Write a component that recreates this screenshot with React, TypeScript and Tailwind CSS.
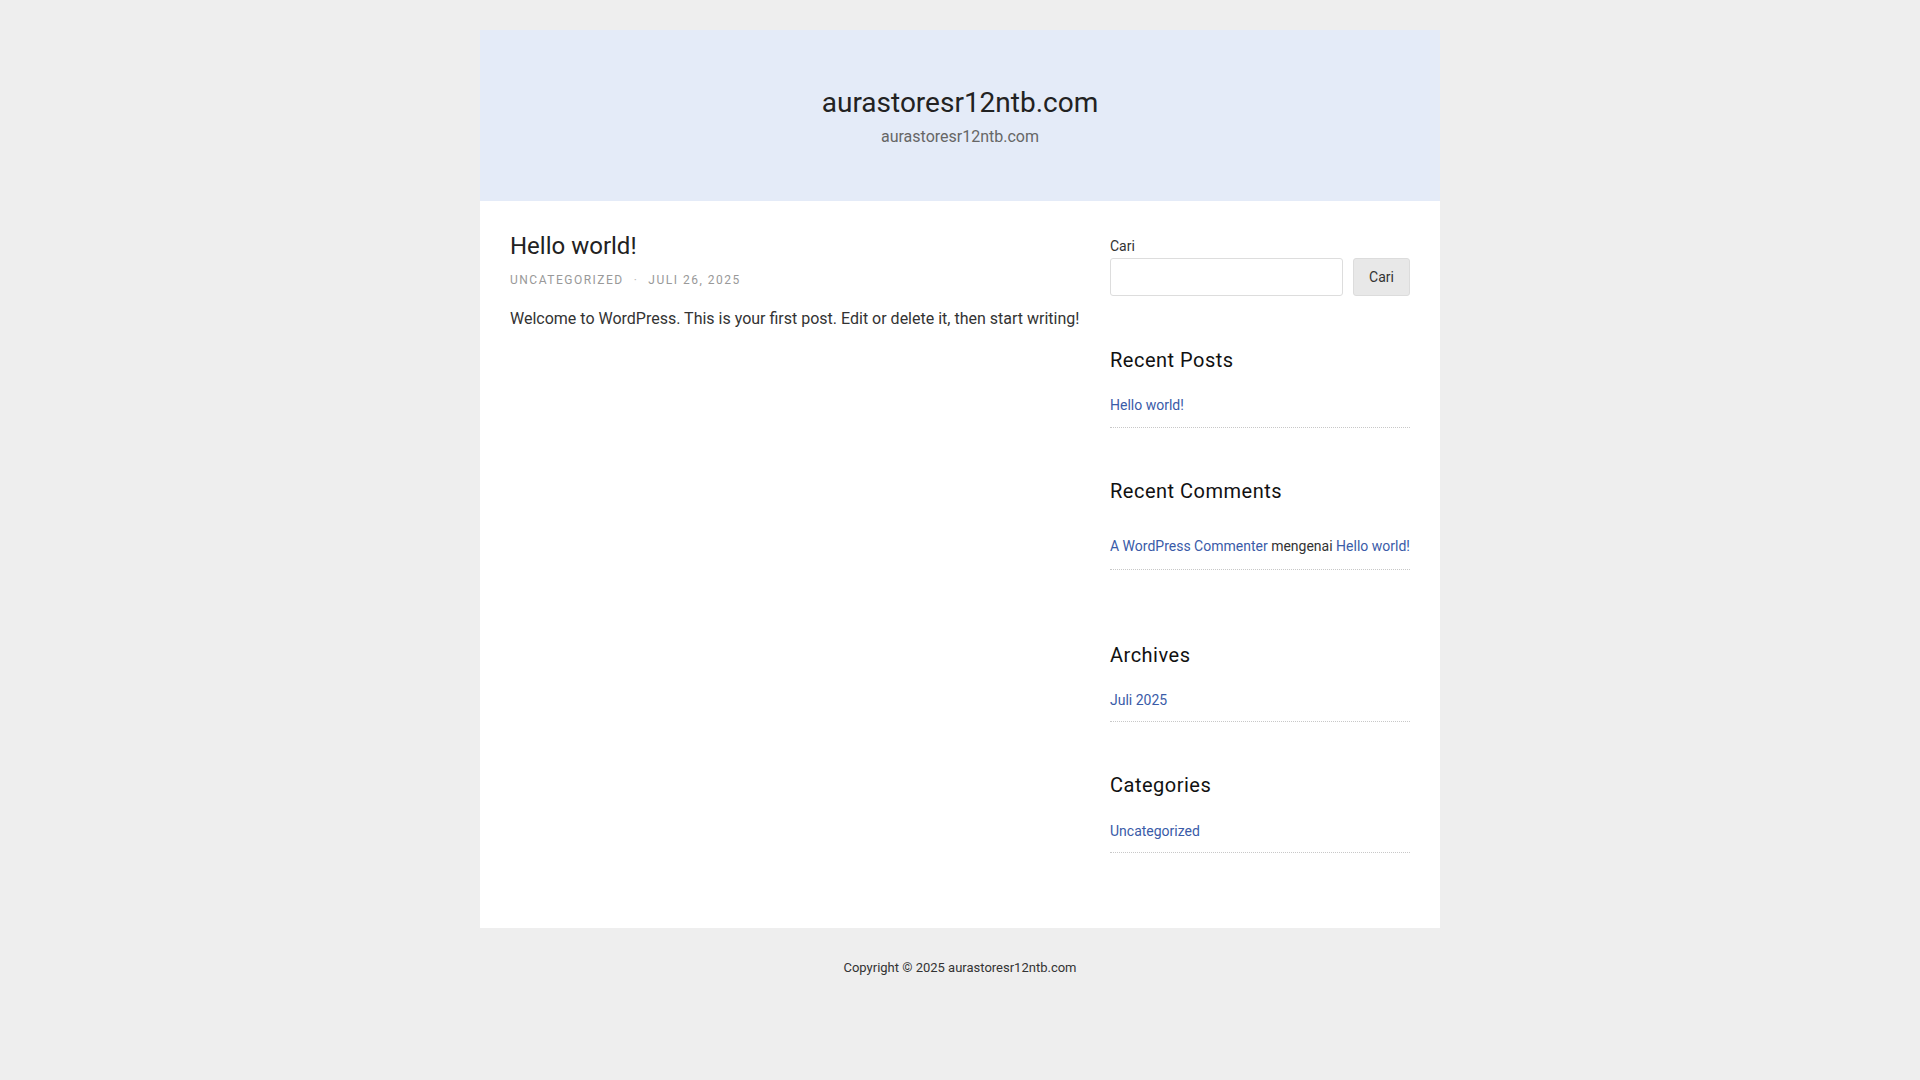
import React from "react";

const font = { fontFamily: "Roboto, 'Noto Sans', Arial, sans-serif" };

function Widget({ title, children, gapTop, gapBody, pb }: { title: string; children: React.ReactNode; gapTop: string; gapBody: string; pb: string }) {
  return (
    <section className={gapTop}>
      <h2 className="text-[20px] leading-[28px] tracking-[0.5px] text-[#111] font-normal">{title}</h2>
      <div className={`${gapBody} ${pb} border-b border-dotted border-[#c8c8c8] text-[14px] leading-[20px]`}>{children}</div>
    </section>
  );
}

export default function App() {
  return (
    <div className="min-h-screen bg-[#eeeeee] pt-[30px]" style={font}>
      <div className="w-[960px] mx-auto">
        <header className="h-[171px] bg-[#e4ebf8] flex flex-col items-center justify-center">
          <h1 className="text-[28px] leading-[34px] text-[#222] font-normal mt-[3px]">aurastoresr12ntb.com</h1>
          <p className="text-[16px] leading-[22px] text-[#666] mt-[6px]">aurastoresr12ntb.com</p>
        </header>
        <main className="bg-white flex gap-[30px] px-[30px] pt-[31px] pb-[75px]">
          <article className="flex-1">
            <h2 className="text-[24px] leading-[28px] text-[#222] font-normal">Hello world!</h2>
            <div className="mt-[12px] text-[12px] leading-[16px] tracking-[1.5px] text-[#999] uppercase flex gap-[10px]">
              <span>Uncategorized</span>
              <span className="text-[#bbb]">·</span>
              <span>Juli 26, 2025</span>
            </div>
            <p className="mt-[19px] text-[16px] leading-[24px] text-[#333]">
              Welcome to WordPress. This is your first post. Edit or delete it, then start writing!
            </p>
          </article>
          <aside className="w-[300px] shrink-0 pt-[4px]">
            <label className="block text-[14px] leading-[20px] text-[#333]">Cari</label>
            <div className="mt-[2px] flex gap-[10px]">
              <input className="w-[233px] h-[38px] border border-[#ddd] rounded-[3px] bg-white outline-none" />
              <button className="flex-1 h-[38px] bg-[#e8e8e8] border border-[#dcdcdc] rounded-[3px] text-[14px] text-[#333]">Cari</button>
            </div>
            <Widget title="Recent Posts" gapTop="mt-[50px]" gapBody="pt-[21px]" pb="pb-[12px]">
              <a className="text-[#3a5ba8]">Hello world!</a>
            </Widget>
            <Widget title="Recent Comments" gapTop="mt-[49px]" gapBody="pt-[31px]" pb="pb-[13px]">
              <span className="whitespace-nowrap">
                <a className="text-[#3a5ba8]">A WordPress Commenter</a>
                <span className="text-[#333]"> mengenai </span>
                <a className="text-[#3a5ba8]">Hello world!</a>
              </span>
            </Widget>
            <Widget title="Archives" gapTop="mt-[71px]" gapBody="pt-[21px]" pb="pb-[11px]">
              <a className="text-[#3a5ba8]">Juli 2025</a>
            </Widget>
            <Widget title="Categories" gapTop="mt-[49px]" gapBody="pt-[22px]" pb="pb-[11px]">
              <a className="text-[#3a5ba8]">Uncategorized</a>
            </Widget>
          </aside>
        </main>
        <footer className="pt-[30px] pb-[40px] text-center text-[13px] leading-[20px] text-[#333]">
          Copyright © 2025 aurastoresr12ntb.com
        </footer>
      </div>
    </div>
  );
}
